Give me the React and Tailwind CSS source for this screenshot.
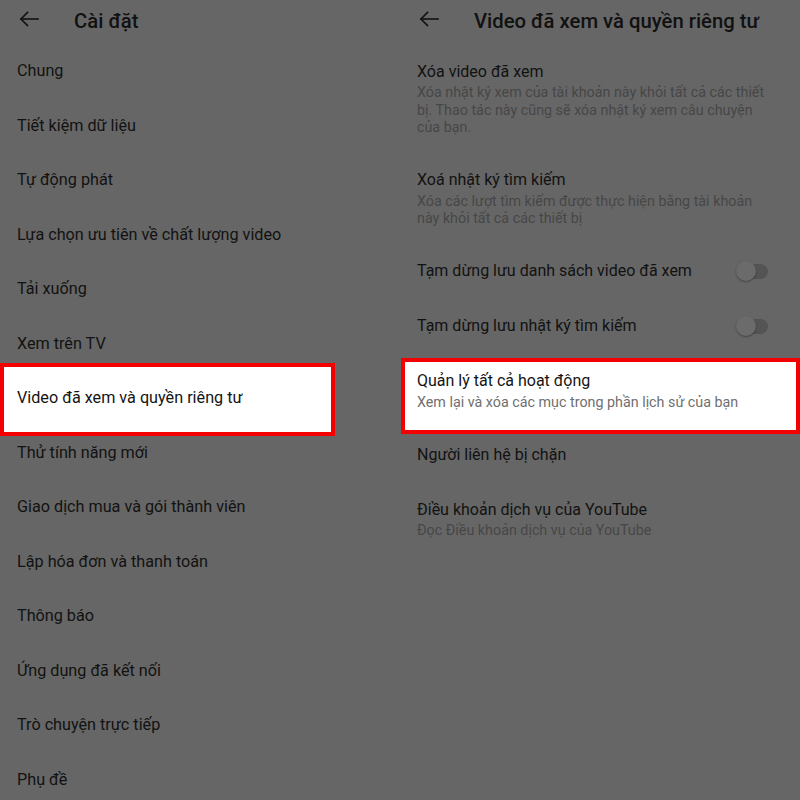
import React from "react";

const font = { fontFamily: "Roboto, 'Noto Sans', sans-serif" };

function Arrow() {
  return (
    <svg width="20" height="16" viewBox="0 0 20 16" fill="none" stroke="#111" strokeWidth="1.6" strokeLinecap="square">
      <path d="M19 8H2" />
      <path d="M8.5 1.5L2 8l6.5 6.5" />
    </svg>
  );
}

function Header({ title }) {
  return (
    <div className="h-[44px] shrink-0 flex items-start pt-[9px]">
      <div className="w-[74px] pl-[19px] pt-[2px] flex">
        <Arrow />
      </div>
      <div className="text-[20.3px] leading-[24px] font-medium text-[#111]">{title}</div>
    </div>
  );
}

const leftItems = [
  "Chung",
  "Tiết kiệm dữ liệu",
  "Tự động phát",
  "Lựa chọn ưu tiên về chất lượng video",
  "Tải xuống",
  "Xem trên TV",
  "Video đã xem và quyền riêng tư",
  "Thử tính năng mới",
  "Giao dịch mua và gói thành viên",
  "Lập hóa đơn và thanh toán",
  "Thông báo",
  "Ứng dụng đã kết nối",
  "Trò chuyện trực tiếp",
  "Phụ đề",
];

function Toggle() {
  return (
    <div className="relative w-[32px] h-[20px] -my-[1px] flex items-center">
      <div className="absolute left-[4px] right-0 h-[15px] rounded-full bg-[#545454]" />
      <div className="absolute left-0 w-[20px] h-[20px] rounded-full bg-[#6b6b6b] shadow-[0_1px_2px_rgba(0,0,0,0.35)]" />
    </div>
  );
}

function RightItem({ title, sub, toggle, highlight }) {
  return (
    <div className="relative shrink-0 py-[17.5px] pl-[17px] pr-[32px] flex items-center justify-between">
      {highlight && (
        <div className="absolute top-[4px] -bottom-[6.5px] left-[1px] right-0 bg-white border-[4px] border-[#f50000]" />
      )}
      <div className="relative">
        <div className={"text-[16px] leading-[20px] " + (highlight ? "text-[#141414]" : "text-[#121212]")}>{title}</div>
        {sub && (
          <div className={"mt-[2.5px] -mb-[1.5px] text-[14.3px] leading-[17.5px] " + (highlight ? "text-[#6f6f6f]" : "text-[#464646]")}>{sub}</div>
        )}
      </div>
      {toggle && (
        <div className="relative h-[20px] flex items-center">
          <Toggle />
        </div>
      )}
    </div>
  );
}

export default function App() {
  return (
    <div className="w-[800px] h-[800px] bg-[#666666] flex overflow-hidden" style={font}>
      <div className="w-[400px] flex flex-col shrink-0">
        <Header title="Cài đặt" />
        {leftItems.map((t, i) => (
          <div key={i} className="relative h-[54.5px] shrink-0 flex items-center pl-[17px]">
            {i === 6 && (
              <div className="absolute -top-[8px] -bottom-[10.5px] left-0 right-[65px] bg-white border-[4px] border-[#f50000]" />
            )}
            <div className={"relative text-[16.2px] leading-[20px] " + (i === 6 ? "text-[#141414]" : "text-[#121212]")}>{t}</div>
          </div>
        ))}
      </div>
      <div className="w-[400px] flex flex-col shrink-0">
        <Header title="Video đã xem và quyền riêng tư" />
        <RightItem
          title="Xóa video đã xem"
          sub="Xóa nhật ký xem của tài khoản này khỏi tất cả các thiết bị. Thao tác này cũng sẽ xóa nhật ký xem câu chuyện của bạn."
        />
        <RightItem
          title="Xoá nhật ký tìm kiếm"
          sub="Xóa các lượt tìm kiếm được thực hiện bằng tài khoản này khỏi tất cả các thiết bị"
        />
        <RightItem title="Tạm dừng lưu danh sách video đã xem" toggle />
        <RightItem title="Tạm dừng lưu nhật ký tìm kiếm" toggle />
        <RightItem
          title="Quản lý tất cả hoạt động"
          sub="Xem lại và xóa các mục trong phần lịch sử của bạn"
          highlight
        />
        <RightItem title="Người liên hệ bị chặn" />
        <RightItem title="Điều khoản dịch vụ của YouTube" sub="Đọc Điều khoản dịch vụ của YouTube" />
      </div>
    </div>
  );
}
